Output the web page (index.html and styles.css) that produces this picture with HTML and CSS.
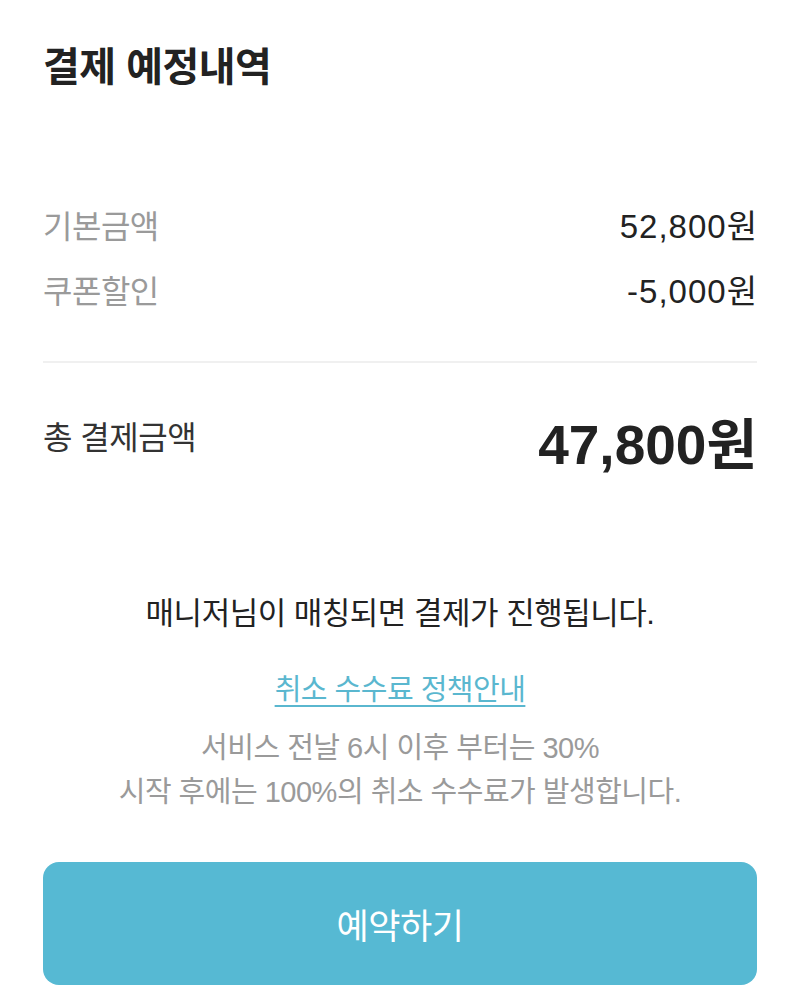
FILE: index.html
```html
<!DOCTYPE html>
<html lang="ko">
<head>
<meta charset="utf-8">
<link rel="stylesheet" href="styles.css">
</head>
<body>
<main class="page">
  <h1 class="title">결제 예정내역</h1>
  <section class="lines">
    <div class="row"><span class="label">기본금액</span><span class="value">52,800원</span></div>
    <div class="row"><span class="label">쿠폰할인</span><span class="value">-5,000원</span></div>
  </section>
  <hr class="divider">
  <div class="total">
    <span class="total-label">총 결제금액</span>
    <span class="total-value">47,800원</span>
  </div>
  <p class="notice">매니저님이 매칭되면 결제가 진행됩니다.</p>
  <a class="policy" href="#">취소 수수료 정책안내</a>
  <p class="fee">서비스 전날 6시 이후 부터는 30%<br>시작 후에는 100%의 취소 수수료가 발생합니다.</p>
  <button class="reserve">예약하기</button>
</main>
</body>
</html>
```
FILE: styles.css
```css
html, body {
  margin: 0;
  padding: 0;
  background: #ffffff;
}
body {
  font-family: "Liberation Sans", "Noto Sans CJK KR", sans-serif;
  color: #222222;
}
.page {
  padding: 40px 43px 24px;
  display: flex;
  flex-direction: column;
}
.title {
  margin: 0;
  font-size: 40px;
  font-weight: 700;
  line-height: 54px;
  color: #222222;
  letter-spacing: -0.5px;
}
.lines {
  margin-top: 108px;
  display: flex;
  flex-direction: column;
  gap: 21px;
}
.row {
  display: flex;
  justify-content: space-between;
  align-items: center;
  height: 44px;
  font-size: 32px;
  letter-spacing: -0.5px;
}
.label {
  color: #9a9a9a;
}
.value {
  color: #222222;
  font-size: 33px;
  letter-spacing: 1px;
  margin-right: -1px;
}
.divider {
  margin: 50px 0 0;
  border: 0;
  height: 2px;
  background: #f0f0f0;
}
.total {
  margin-top: 51px;
  display: flex;
  justify-content: space-between;
  align-items: flex-start;
}
.total-label {
  font-size: 32px;
  color: #333333;
  line-height: 48px;
  letter-spacing: -0.5px;
}
.total-value {
  font-size: 55px;
  font-weight: 700;
  line-height: 62px;
  color: #222222;
}
.notice {
  margin: 118px 0 0;
  text-align: center;
  font-size: 31px;
  line-height: 40px;
  color: #222222;
  letter-spacing: -0.5px;
}
.policy {
  margin-top: 36px;
  align-self: center;
  font-size: 29px;
  line-height: 40px;
  color: #5ab7cf;
  text-decoration: underline;
  text-underline-offset: 5px;
  text-decoration-thickness: 2px;
  letter-spacing: -0.5px;
}
.fee {
  margin: 16px 0 0;
  text-align: center;
  font-size: 29px;
  line-height: 44px;
  color: #9a9a9a;
  letter-spacing: -0.5px;
}
.reserve {
  margin-top: 48px;
  height: 123px;
  border: 0;
  border-radius: 16px;
  background: #56b9d3;
  color: #ffffff;
  font-family: inherit;
  font-size: 35px;
  font-weight: 400;
  letter-spacing: -0.5px;
}
```
